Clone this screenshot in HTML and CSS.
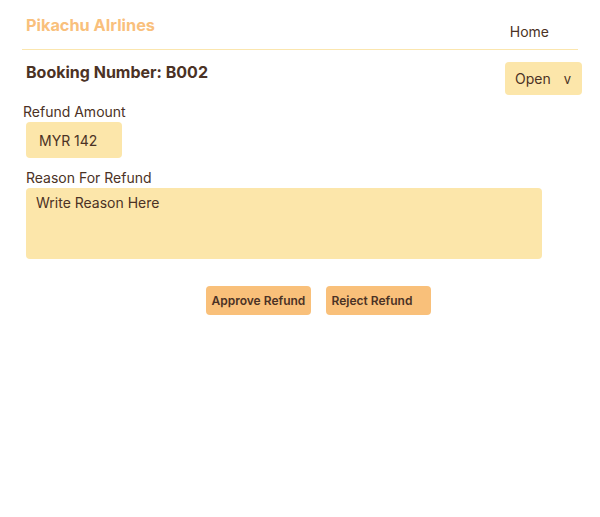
FILE: index.html
```html
<!DOCTYPE html>
<html>
<head>
<meta charset="utf-8">
<link rel="stylesheet" href="styles.css">
</head>
<body>
<header class="topbar">
  <div class="brand">Pikachu AIrlines</div>
  <nav class="nav"><span class="nav-link">Home</span></nav>
</header>
<main class="page">
  <div class="booking-row">
    <h1 class="booking-title">Booking Number: B002</h1>
    <div class="status-select"><span>Open</span><span class="chev">v</span></div>
  </div>
  <label class="label label-amount">Refund Amount</label>
  <div class="amount-box">MYR 142</div>
  <label class="label label-reason">Reason For Refund</label>
  <div class="reason-box">Write Reason Here</div>
  <div class="actions">
    <button class="btn">Approve Refund</button>
    <button class="btn btn-reject">Reject Refund</button>
  </div>
</main>
</body>
</html>
```
FILE: styles.css
```css
* { box-sizing: border-box; }
body {
  margin: 0;
  font-family: Inter, "Noto Sans", sans-serif;
  color: #4b3225;
  background: #fff;
}
.topbar {
  margin: 0 22px;
  height: 50px;
  display: flex;
  justify-content: space-between;
  border-bottom: 1px solid #fbe6ae;
}
.brand {
  padding: 16px 0 0 4px;
  font-size: 16.3px;
  font-weight: 700;
  color: #f9c07c;
  line-height: 19px;
}
.nav {
  padding: 21px 29px 0 0;
}
.nav-link {
  font-size: 14px;
  line-height: 18px;
  color: #4b3225;
}
.page {
  padding: 0 22px;
}
.booking-row {
  display: flex;
  justify-content: space-between;
  align-items: flex-start;
  padding: 12px 0 0 4px;
}
.booking-title {
  margin: 0;
  font-size: 16px;
  line-height: 20px;
  font-weight: 700;
  color: #4b3225;
}
.status-select {
  width: 77px;
  height: 33px;
  margin-right: -4px;
  background: #fce6aa;
  border-radius: 4px;
  display: flex;
  align-items: center;
  justify-content: space-between;
  padding: 0 11px 0 10px;
  font-size: 14px;
}
.chev { font-size: 13px; }
.label {
  display: block;
  font-size: 14px;
  line-height: 18px;
}
.label-amount { margin: 8px 0 0 1px; }
.amount-box {
  margin: 1px 0 0 4px;
  width: 96px;
  height: 36px;
  background: #fce6aa;
  border-radius: 4px;
  padding: 0 13px;
  display: flex;
  align-items: center;
  font-size: 14px;
}
.label-reason { margin: 11px 0 0 4px; }
.reason-box {
  margin: 1px 0 0 4px;
  width: 516px;
  height: 71px;
  background: #fce6aa;
  border-radius: 4px;
  padding: 6px 10px;
  font-size: 14px;
  line-height: 18px;
}
.actions {
  display: flex;
  justify-content: center;
  gap: 15px;
  margin-top: 27px;
  padding-left: 36px;
}
.btn {
  width: 105px;
  height: 29px;
  border: none;
  border-radius: 4px;
  background: #f9c07a;
  font-family: Inter, "Noto Sans", sans-serif;
  font-size: 12px;
  font-weight: 600;
  color: #4b3225;
  padding: 0 6px;
  text-align: left;
  white-space: nowrap;
  cursor: pointer;
}
```
